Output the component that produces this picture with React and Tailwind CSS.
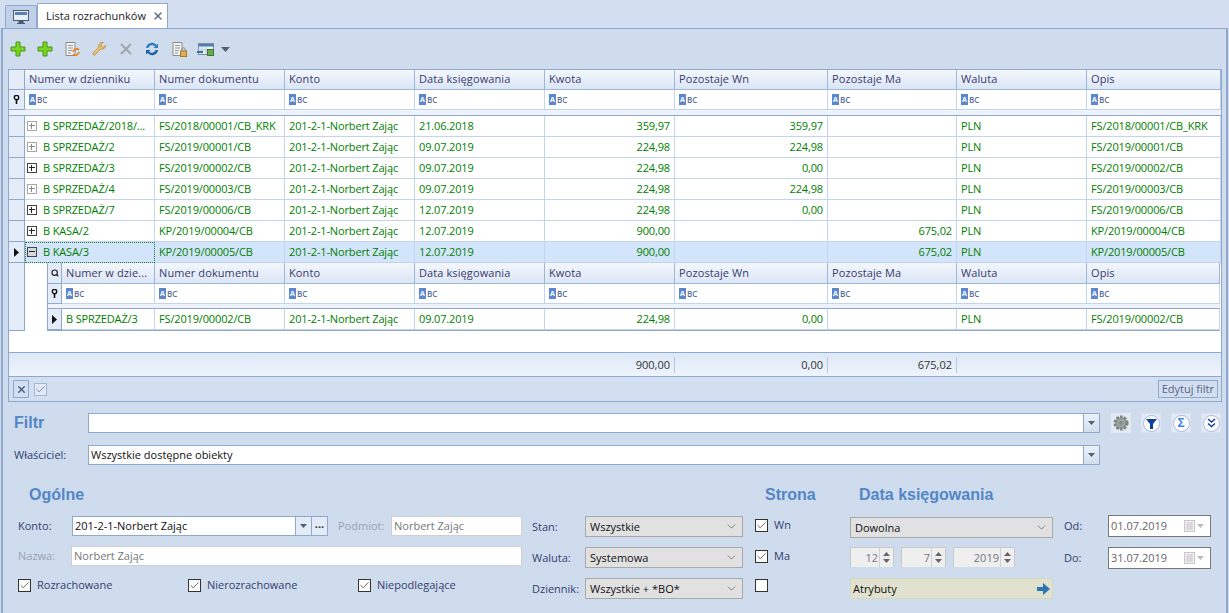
import { X, ChevronDown, Check, Search } from 'lucide-react'

const cols = 'grid-cols-[16px_130px_130px_130px_130px_130px_153px_129px_130px_134px]'
const subCols = 'grid-cols-[15px_93px_130px_130px_130px_130px_153px_129px_130px_133px]'
const headers = ['Numer dokumentu', 'Konto', 'Data księgowania', 'Kwota', 'Pozostaje Wn', 'Pozostaje Ma', 'Waluta', 'Opis']

const rows = [
  { nr: 'B SPRZEDAŻ/2018/...', doc: 'FS/2018/00001/CB_KRK', date: '21.06.2018', kwota: '359,97', wn: '359,97', ma: '', opis: 'FS/2018/00001/CB_KRK', faded: true },
  { nr: 'B SPRZEDAŻ/2', doc: 'FS/2019/00001/CB', date: '09.07.2019', kwota: '224,98', wn: '224,98', ma: '', opis: 'FS/2019/00001/CB', faded: true },
  { nr: 'B SPRZEDAŻ/3', doc: 'FS/2019/00002/CB', date: '09.07.2019', kwota: '224,98', wn: '0,00', ma: '', opis: 'FS/2019/00002/CB' },
  { nr: 'B SPRZEDAŻ/4', doc: 'FS/2019/00003/CB', date: '09.07.2019', kwota: '224,98', wn: '224,98', ma: '', opis: 'FS/2019/00003/CB', faded: true },
  { nr: 'B SPRZEDAŻ/7', doc: 'FS/2019/00006/CB', date: '12.07.2019', kwota: '224,98', wn: '0,00', ma: '', opis: 'FS/2019/00006/CB' },
  { nr: 'B KASA/2', doc: 'KP/2019/00004/CB', date: '12.07.2019', kwota: '900,00', wn: '', ma: '675,02', opis: 'KP/2019/00004/CB' },
  { nr: 'B KASA/3', doc: 'KP/2019/00005/CB', date: '12.07.2019', kwota: '900,00', wn: '', ma: '675,02', opis: 'KP/2019/00005/CB', open: true },
]

const HeadCell = ({ children }) => (
  <div className="flex items-center px-1 pb-px border-r border-b border-[#9fb6d6] bg-gradient-to-b from-[#f3f7fc] to-[#dbe6f5] text-[#3a3a6e] tracking-[0.1px] whitespace-nowrap overflow-hidden">
    {children}
  </div>
)

const AbcIcon = () => (
  <span className="flex items-center gap-px">
    <span className="w-[7px] h-[11px] bg-[#5b86d0] text-white text-[7px] leading-[11px] text-center font-bold">A</span>
    <span className="text-[#5a6f96] text-[8px] font-semibold leading-none">BC</span>
  </span>
)

const FilterCell = () => (
  <div className="flex items-center px-1 border-r border-b border-[#c3d5ec] bg-white">
    <AbcIcon />
  </div>
)

const PinIcon = () => (
  <svg width="7" height="9" viewBox="0 0 7 9">
    <circle cx="3.5" cy="2.5" r="2.2" fill="none" stroke="#111" strokeWidth="1.4" />
    <path d="M3.5 4v5" stroke="#111" strokeWidth="1.6" />
  </svg>
)

const RowArrow = () => (
  <svg width="5" height="9" viewBox="0 0 5 9">
    <path d="M0 0l5 4.5L0 9z" fill="#111" />
  </svg>
)

const Side = ({ children, className = '' }) => (
  <div className={`flex items-center justify-center bg-[#e3ecf8] border-r border-b border-[#8fa8cc] ${className}`}>
    {children}
  </div>
)

const Box = ({ minus, faded, fill }) => (
  <span className={`relative w-[10px] h-[10px] border ${faded ? 'border-[#a8a8a8]' : 'border-[#444]'} ${fill ? 'bg-[#d8d8d8]' : 'bg-white'}`}>
    <span className={`absolute left-[1px] top-[3px] w-[6px] h-px ${faded ? 'bg-[#888]' : 'bg-[#222]'}`} />
    {!minus && <span className={`absolute left-[3px] top-[1px] w-px h-[6px] ${faded ? 'bg-[#888]' : 'bg-[#222]'}`} />}
  </span>
)

const Cell = ({ children, right, sel, className = 'px-1' }) => (
  <div className={`flex items-center border-r border-b border-[#c3d5ec] text-[#008000] tracking-[-0.15px] whitespace-nowrap overflow-hidden ${right ? 'justify-end' : ''} ${sel ? 'bg-[#d3e5fb]' : 'bg-white'} ${className}`}>
    {children}
  </div>
)

const DataCells = ({ r, sel }) => (
  <>
    <Cell sel={sel}>{r.doc}</Cell>
    <Cell sel={sel}>201-2-1-Norbert Zając</Cell>
    <Cell sel={sel}>{r.date}</Cell>
    <Cell sel={sel} right>{r.kwota}</Cell>
    <Cell sel={sel} right>{r.wn}</Cell>
    <Cell sel={sel} right>{r.ma}</Cell>
    <Cell sel={sel}>PLN</Cell>
    <Cell sel={sel}>{r.opis}</Cell>
  </>
)

const PlusIcon = () => (
  <svg width="16" height="16" viewBox="0 0 16 16">
    <path d="M6 1h4v5h5v4h-5v5H6v-5H1V6h5z" fill="#7ed321" stroke="#3f9a16" strokeWidth="1" />
  </svg>
)

const DocIcon = ({ badge }) => (
  <svg width="17" height="17" viewBox="0 0 17 17">
    <path d="M2 1.5h9v13H2z" fill="#f2f2ee" stroke="#8d8d86" />
    <path d="M4 4.5h5M4 7h5M4 9.500h4M4 12h3" stroke="#8d9aa8" />
    {badge === 'lock' ? (
      <>
        <rect x="9.500" y="10" width="6" height="5.500" fill="#e2ad4e" stroke="#a9792a" />
        <path d="M10.800 10V8.500a1.700 1.700 0 013.400 0V10" fill="none" stroke="#8d8d86" />
      </>
    ) : (
      <path d="M9 11a3.500 3.500 0 016-2M15 11a3.500 3.500 0 01-6 2" fill="none" stroke="#e8851c" strokeWidth="1.700" />
    )}
  </svg>
)

const Toolbar = () => (
  <div className="flex items-center h-[40px] pl-[7px]">
    <PlusIcon />
    <span className="w-[11px]" />
    <PlusIcon />
    <span className="w-[11px]" />
    <DocIcon />
    <span className="w-[10px]" />
    <svg width="16" height="16" viewBox="0 0 16 16">
      <path d="M14.500 4.500a3.800 3.800 0 01-5 3.600L4 14a1.500 1.500 0 01-2-2l5.800-5.600a3.800 3.800 0 014.400-5L10 3.600l.5 2 2 .5z" fill="#f0c274" stroke="#b9853a" strokeWidth="0.800" />
    </svg>
    <span className="w-[10px]" />
    <X size={18} strokeWidth={2.4} className="text-[#a3a3a3]" />
    <span className="w-[9px]" />
    <svg width="16" height="16" viewBox="0 0 16 16">
      <path d="M2 7a6 6 0 0110.500-3L14 2.500V7H9.500l1.500-1.500A4 4 0 004.300 7z" fill="#2f7fc0" />
      <path d="M14 9a6 6 0 01-10.500 3L2 13.500V9h4.500L5 10.500A4 4 0 0011.700 9z" fill="#1c62a3" />
    </svg>
    <span className="w-[11px]" />
    <DocIcon badge="lock" />
    <span className="w-[9px]" />
    <svg width="18" height="16" viewBox="0 0 18 16">
      <rect x="1.500" y="2.500" width="15" height="11" fill="#edf2f7" stroke="#7f8fa3" />
      <path d="M1.500 3h15v2.500h-15z" fill="#4c7fb8" />
      <path d="M5 6v7M9 6v7M1.500 9h15" stroke="#b6c3d2" />
      <rect x="10.500" y="8.500" width="6" height="6" fill="#6cab4d" stroke="#3f7a2a" />
      <path d="M0 11h6" stroke="#2f6fb0" strokeWidth="2" />
    </svg>
    <span className="w-[6px]" />
    <svg width="9" height="5" viewBox="0 0 9 5">
      <path d="M0 0h9L4.500 5z" fill="#50607a" />
    </svg>
  </div>
)

const Grid = () => (
  <div className="ml-[5px] mr-[4px] h-[333px] border border-[#8fa8cc] bg-white flex flex-col">
    <div className={`grid ${cols} h-[20px]`}>
      <Side />
      <HeadCell>Numer w dzienniku</HeadCell>
      {headers.map(h => <HeadCell key={h}>{h}</HeadCell>)}
    </div>
    <div className={`grid ${cols} h-[20px]`}>
      <Side><PinIcon /></Side>
      {Array.from({ length: 9 }).map((_, i) => <FilterCell key={i} />)}
    </div>
    <div className="h-[6px] bg-[#eef3fb] border-b border-[#8fa8cc]" />
    {rows.map(r => (
      <div key={r.nr} className={`grid ${cols} h-[21px]`}>
        <Side>{r.open && <RowArrow />}</Side>
        <Cell sel={r.open} className={r.open ? 'pl-[2px] outline-1 outline-dotted -outline-offset-1 outline-[#1c7c3c]' : 'pl-[2px]'}>
          <Box minus={r.open} faded={r.faded} fill={r.open} />
          <span className="ml-[6px]">{r.nr}</span>
        </Cell>
        <DataCells r={r} sel={r.open} />
      </div>
    ))}
    <div className="flex h-[68px]">
      <Side className="w-[16px] shrink-0" />
      <div className="w-[22px] shrink-0 bg-white" />
      <div className="w-[1173px] shrink-0 flex flex-col border-b border-[#8fa8cc]">
        <div className={`grid ${subCols} h-[21px]`}>
          <Side className="border-l"><Search size={8} strokeWidth={3.5} className="text-[#222]" /></Side>
          <HeadCell>Numer w dzie...</HeadCell>
          {headers.map(h => <HeadCell key={h}>{h}</HeadCell>)}
        </div>
        <div className={`grid ${subCols} h-[20px]`}>
          <Side className="border-l"><PinIcon /></Side>
          {Array.from({ length: 9 }).map((_, i) => <FilterCell key={i} />)}
        </div>
        <div className="h-[5px] bg-[#eef3fb] border-b border-l border-[#8fa8cc]" />
        <div className={`grid ${subCols} h-[21px]`}>
          <Side className="border-l"><RowArrow /></Side>
          <Cell>B SPRZEDAŻ/3</Cell>
          <DataCells r={rows[2]} />
        </div>
      </div>
      <div className="w-px bg-white" />
    </div>
    <div className="h-[21px] bg-white" />
    <div className={`grid grid-cols-[666px_153px_129px_1fr] h-[24px] border-t border-[#8fa8cc] bg-gradient-to-b from-[#dde8f6] to-[#eef4fc] text-[#333]`}>
      <div className="flex items-center justify-end pr-1 border-r border-[#b4c8e4] my-1">900,00</div>
      <div className="flex items-center justify-end pr-1 border-r border-[#b4c8e4] my-1">0,00</div>
      <div className="flex items-center justify-end pr-1 border-r border-[#b4c8e4] my-1">675,02</div>
      <div />
    </div>
    <div className="flex-1 flex items-center justify-between pl-1 pr-[3px] border-t border-[#8fa8cc] bg-[#d2dff0]">
      <div className="flex items-center gap-[5px]">
        <span className="w-[16px] h-[18px] flex items-center justify-center border border-[#8fa8cc]">
          <X size={11} strokeWidth={3} className="text-[#475a78]" />
        </span>
        <span className="w-[13px] h-[13px] flex items-center justify-center border border-[#a4b7d2] bg-[#e2e9f4]">
          <Check size={11} strokeWidth={2} className="text-[#6d80a0]" />
        </span>
      </div>
      <span className="h-[18px] px-[3px] flex items-center border border-[#8fa8cc] text-[#5c5f86]">Edytuj filtr</span>
    </div>
  </div>
)

const RoundIcon = ({ children }) => (
  <span className="w-[20px] h-[20px] flex items-center justify-center bg-[#e3eaf6] border border-[#dbe3f0]">
    <span className="w-[17px] h-[17px] rounded-full bg-white border border-[#a8b7de] flex items-center justify-center">
      {children}
    </span>
  </span>
)

const Combo = ({ value, className = '' }) => (
  <div className={`flex h-[20px] border border-[#8fa8cc] bg-white ${className}`}>
    <span className="flex-1 px-[2px] flex items-center text-[#111]">{value}</span>
    <span className="w-[16px] flex items-center justify-center border-l border-[#8fa8cc] bg-gradient-to-b from-[#eaf0f8] to-[#d3deee]">
      <svg width="7" height="4" viewBox="0 0 7 4"><path d="M0 0h7L3.500 4z" fill="#4d5d78" /></svg>
    </span>
  </div>
)

const Title = ({ children, className = '' }) => (
  <div className={`font-['Liberation_Sans',sans-serif] font-bold text-[16px] leading-5 text-[#5286c6] ${className}`}>{children}</div>
)

const CheckBox = ({ label, off }) => (
  <span className="flex items-center gap-[6px] text-[#33406e]">
    <span className="w-[13px] h-[13px] flex items-center justify-center border border-[#333] bg-white">
      {!off && <Check size={11} strokeWidth={1.6} className="text-[#333]" />}
    </span>
    {label}
  </span>
)

const Select = ({ value, className = '' }) => (
  <div className={`flex items-center justify-between h-[21px] px-1 border border-[#a9a9a9] bg-[#e1e1e1] text-[#111] ${className}`}>
    {value}
    <ChevronDown size={13} strokeWidth={1.3} className="text-[#555]" />
  </div>
)

const Spinner = ({ value, className = '' }) => (
  <div className={`flex h-[20px] border border-b-0 border-[#c9c9c9] bg-[#efefef] text-[#777] ${className}`}>
    <span className="flex-1 flex items-center justify-end pr-px">{value}</span>
    <span className="w-[14px] flex flex-col items-center justify-around border-l border-[#d0d0d0] py-[3px]">
      <svg width="7" height="4" viewBox="0 0 7 4"><path d="M0 4h7L3.500 0z" fill="#666" /></svg>
      <svg width="7" height="4" viewBox="0 0 7 4"><path d="M0 0h7L3.500 4z" fill="#666" /></svg>
    </span>
  </div>
)

const DateField = ({ value }) => (
  <div className="flex items-center justify-between w-[103px] h-[22px] pl-[2px] pr-[6px] border border-[#777] bg-white text-[#666]">
    {value}
    <span className="flex items-center gap-[2px]">
      <svg width="11" height="12" viewBox="0 0 11 12">
        <rect x="0.500" y="0.500" width="10" height="11" fill="#eee" stroke="#c8c8c8" />
        <path d="M2 3h7M2 5h7M2 7h7M2 9h7M4 3v7M7 3v7" stroke="#cfcfcf" />
      </svg>
      <svg width="7" height="4" viewBox="0 0 7 4"><path d="M0 0h7L3.500 4z" fill="#bbb" /></svg>
    </span>
  </div>
)

const Form = () => (
  <div className="flex flex-col">
    <div className="flex items-center h-[20px] mt-[11px] pl-[14px] -ml-[3px]">
      <Title className="w-[74px]">Filtr</Title>
      <Combo className="w-[1012px]" />
      <div className="flex items-center ml-[11px] gap-[10px]">
        <span className="w-[20px] h-[20px] flex items-center justify-center bg-[#e3eaf6]">
          <svg width="18" height="18" viewBox="0 0 18 18">
            <circle cx="9" cy="9" r="6" fill="#9ba39c" stroke="#7d857e" strokeWidth="3" strokeDasharray="2.500 1.300" />
            <circle cx="9" cy="9" r="2" fill="#7d8ea0" />
          </svg>
        </span>
        <RoundIcon>
          <svg width="11" height="11" viewBox="0 0 11 11"><path d="M0 1h11L7 6v5H4V6z" fill="#0f3f9c" /></svg>
        </RoundIcon>
        <RoundIcon>
          <span className="text-[#3f85e6] font-bold text-[12px] leading-none">Σ</span>
        </RoundIcon>
        <RoundIcon>
          <svg width="9" height="10" viewBox="0 0 9 10" fill="none" stroke="#0f3f9c" strokeWidth="1.500">
            <path d="M1 1l3.500 3L8 1M1 5.500l3.500 3 3.500-3" />
          </svg>
        </RoundIcon>
      </div>
    </div>
    <div className="flex items-center h-[20px] mt-[12px] pl-[14px] -ml-[3px]">
      <span className="w-[74px] text-[#33406e]">Właściciel:</span>
      <Combo value="Wszystkie dostępne obiekty" className="w-[1012px]" />
    </div>

    <div className="flex mt-[20px] -ml-[3px]">
      <div className="w-[514px] ml-[18px] flex flex-col">
        <Title className="ml-[11px]">Ogólne</Title>
        <div className="flex items-center mt-[11px] h-[20px]">
          <span className="w-[54px] text-[#33406e]">Konto:</span>
          <div className="w-[256px] flex h-[20px] border border-[#8fa8cc] bg-white">
            <span className="flex-1 flex items-center px-[2px] text-[#111]">201-2-1-Norbert Zając</span>
            <span className="w-[16px] flex items-center justify-center border-l border-[#8fa8cc] bg-[#e3ebf6]">
              <svg width="7" height="4" viewBox="0 0 7 4"><path d="M0 0h7L3.500 4z" fill="#4d5d78" /></svg>
            </span>
            <span className="w-[16px] flex items-center justify-center border-l border-[#8fa8cc] bg-[#e3ebf6] text-[#333] leading-none font-bold">···</span>
          </div>
          <span className="ml-[10px] w-[53px] text-[#9aa2b2]">Podmiot:</span>
          <span className="w-[131px] h-[20px] flex items-center px-[2px] border border-[#d0d0d0] bg-white text-[#777]">Norbert Zając</span>
        </div>
        <div className="flex items-center mt-[10px] h-[20px]">
          <span className="w-[53px] text-[#9aa2b2]">Nazwa:</span>
          <span className="w-[451px] h-[20px] flex items-center px-[2px] border border-[#d0d0d0] bg-white text-[#777]">Norbert Zając</span>
        </div>
        <div className="flex items-center mt-[9px] h-[20px]">
          <span className="w-[170px]"><CheckBox label="Rozrachowane" /></span>
          <span className="w-[170px]"><CheckBox label="Nierozrachowane" /></span>
          <CheckBox label="Niepodlegające" />
        </div>
      </div>

      <div className="w-[211px] pt-[31px] flex flex-col gap-[10px]">
        {[['Stan:', 'Wszystkie'], ['Waluta:', 'Systemowa'], ['Dziennik:', 'Wszystkie + *BO*']].map(([l, v]) => (
          <div key={l} className="flex items-center h-[21px]">
            <span className="w-[53px] text-[#33406e]">{l}</span>
            <Select value={v} className="w-[158px]" />
          </div>
        ))}
      </div>

      <div className="w-[95px] ml-[12px] flex flex-col">
        <Title className="ml-[10px]">Strona</Title>
        <div className="mt-[12px] flex flex-col gap-[15px]">
          <CheckBox label="Wn" />
          <CheckBox label="Ma" />
          <CheckBox off />
        </div>
      </div>

      <div className="w-[203px] flex flex-col">
        <Title className="ml-[9px]">Data księgowania</Title>
        <Select value="Dowolna" className="mt-[12px]" />
        <div className="flex gap-[7px] mt-[9px]">
          <Spinner value="12" className="w-[44px]" />
          <Spinner value="7" className="w-[45px]" />
          <Spinner value="2019" className="w-[62px]" />
        </div>
        <div className="mt-[11px] h-[21px] flex items-center justify-between px-[2px] border border-[#d6d8bf] rounded-[2px] bg-[#e0e2cf] text-[#111]">
          Atrybuty
          <svg width="13" height="12" viewBox="0 0 13 12"><path d="M0 4h6V0l7 6-7 6V8H0z" fill="#2f74b5" /></svg>
        </div>
      </div>

      <div className="ml-[11px] pt-[30px] flex flex-col gap-[10px]">
        {[['Od:', '01.07.2019'], ['Do:', '31.07.2019']].map(([l, v]) => (
          <div key={l} className="flex items-center h-[22px]">
            <span className="w-[44px] text-[#33406e]">{l}</span>
            <DateField value={v} />
          </div>
        ))}
      </div>
    </div>
  </div>
)

export default function App() {
  return (
    <div className="w-[1229px] h-[613px] overflow-hidden flex flex-col bg-[#cfdcee] text-[11px] leading-4 font-['Open_Sans','Noto_Sans',sans-serif]">
      <div className="h-[28px] flex items-end pl-[5px] bg-[#d3dff0]">
        <div className="w-[32px] h-[23px] flex items-center justify-center border border-b-0 border-[#8fa8cc] rounded-t-[2px] bg-[#bfd0e8]">
          <svg width="16" height="15" viewBox="0 0 16 15">
            <rect x="0.500" y="0.500" width="15" height="10" fill="#e8eef6" stroke="#465a78" />
            <path d="M2 2h12v3H2z" fill="#5a7fb5" />
            <path d="M6 11h4v2H6zM4 13.500h8" fill="#465a78" stroke="#465a78" />
          </svg>
        </div>
        <div className="w-[131px] h-[25px] flex items-center justify-between pl-[8px] pr-[3px] border border-b-0 border-[#8fa8cc] bg-white font-medium text-[#222]">
          Lista rozrachunków
          <X size={12} strokeWidth={3} className="text-[#5a6c88]" />
        </div>
      </div>
      <div className="flex-1 mx-px border-l-2 border-r-2 border-t border-[#8fa8cc] flex flex-col">
        <Toolbar />
        <Grid />
        <Form />
      </div>
    </div>
  )
}
